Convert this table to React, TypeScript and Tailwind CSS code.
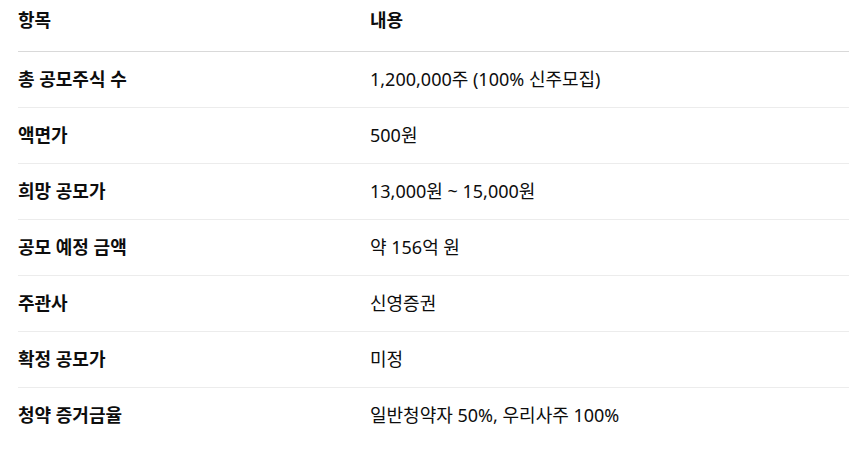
const rows: [string, string][] = [
  ['총 공모주식 수', '1,200,000주 (100% 신주모집)'],
  ['액면가', '500원'],
  ['희망 공모가', '13,000원 ~ 15,000원'],
  ['공모 예정 금액', '약 156억 원'],
  ['주관사', '신영증권'],
  ['확정 공모가', '미정'],
  ['청약 증거금율', '일반청약자 50%, 우리사주 100%'],
];

export default function App() {
  return (
    <div
      className="w-[849px] h-[452px] bg-white pl-[18px] text-[18px] text-[#0d0d0d] overflow-hidden"
      style={{ fontFamily: '"Noto Sans", "Noto Sans CJK KR", sans-serif' }}
    >
      <div className="flex h-[52px] pt-[8px] border-b border-[#d9d9d9] font-bold leading-6">
        <div className="w-[352px]">항목</div>
        <div className="flex-1">내용</div>
      </div>
      {rows.map(([label, value], i) => (
        <div
          key={i}
          className={
            i < rows.length - 1
              ? 'flex items-center h-[56px] pb-[2px] border-b border-[#ececec] leading-6'
              : 'flex items-center h-[56px] pb-[2px] leading-6'
          }
        >
          <div className="w-[352px] font-bold">{label}</div>
          <div className="flex-1">{value}</div>
        </div>
      ))}
    </div>
  );
}
